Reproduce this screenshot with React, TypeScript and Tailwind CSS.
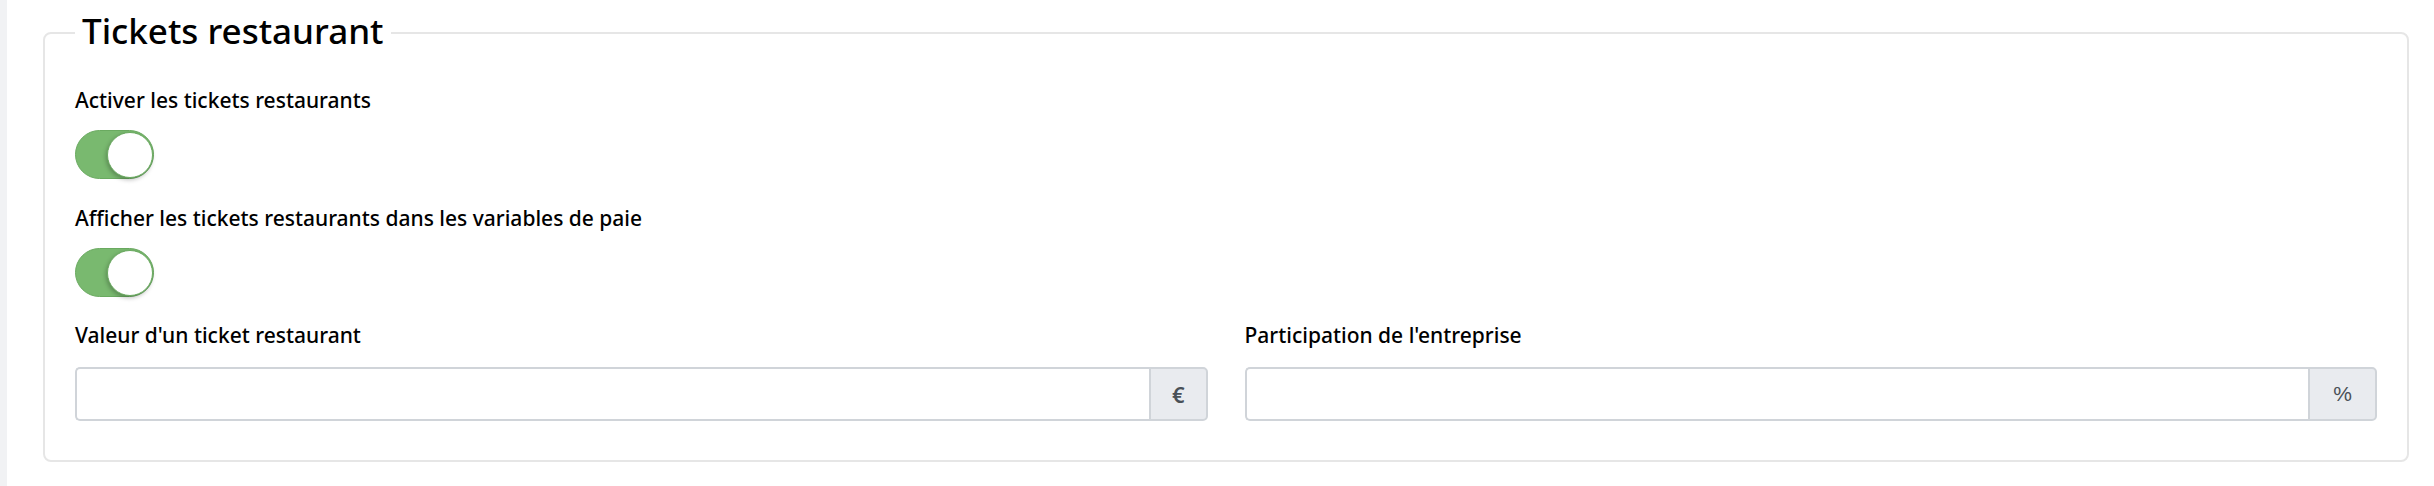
import { useState } from "react";

function Toggle({ on, onChange }: { on: boolean; onChange: () => void }) {
  return (
    <button
      type="button"
      onClick={onChange}
      className={`relative flex h-[49px] w-[79px] items-center rounded-full border ${
        on ? "border-[#6aaa60] bg-[#79b96f]" : "border-[#d0d4d9] bg-[#eef0f2]"
      }`}
    >
      <span
        className={`absolute top-[0.5px] h-[46px] w-[46px] rounded-full border border-[#6aaa60] bg-white shadow-[-1px_2px_4px_rgba(0,0,0,0.25)] ${
          on ? "right-[0px]" : "left-[0px]"
        }`}
      />
    </button>
  );
}

function AddonInput({ label, addon, addonClass }: { label: string; addon: string; addonClass: string }) {
  return (
    <div className="flex flex-col">
      <label className="mb-[19px] text-[21px] leading-[26px] font-medium text-black">{label}</label>
      <div className="flex h-[54px]">
        <input
          type="text"
          className="min-w-0 flex-1 rounded-l-[5px] border-2 border-r-0 border-[#d0d4d9] bg-white px-3 outline-none"
        />
        <span
          className={`flex items-center rounded-r-[5px] border-2 border-[#d0d4d9] bg-[#e9ebef] text-[#495057] ${addonClass}`}
        >
          {addon}
        </span>
      </div>
    </div>
  );
}

export default function App() {
  const [active, setActive] = useState(true);
  const [show, setShow] = useState(true);

  return (
    <div className="flex min-h-[486px] bg-white font-['Noto_Sans',sans-serif]">
      <div className="w-[7px] shrink-0 bg-[#f1f2f4]" />
      <div className="flex-1 pl-[36px] pr-[25px] pt-[7px]">
        <fieldset className="rounded-lg border-2 border-[#e6e6e6] px-[30px] pb-[39px] pt-[28px]">
          <legend className="px-[7px] pb-1 text-[35px] leading-[48px] font-medium text-black">
            Tickets restaurant
          </legend>

          <div className="flex flex-col">
            <label className="mb-[17px] text-[21px] leading-[26px] font-medium text-black">
              Activer les tickets restaurants
            </label>
            <Toggle on={active} onChange={() => setActive(!active)} />
          </div>

          <div className="mt-[26px] flex flex-col">
            <label className="mb-[17px] text-[21px] leading-[26px] font-medium text-black">
              Afficher les tickets restaurants dans les variables de paie
            </label>
            <Toggle on={show} onChange={() => setShow(!show)} />
          </div>

          <div className="mt-[25px] grid grid-cols-2 gap-[37px]">
            <AddonInput
              label="Valeur d'un ticket restaurant"
              addon="€"
              addonClass="px-[21px] text-[22px] font-semibold"
            />
            <AddonInput
              label="Participation de l'entreprise"
              addon="%"
              addonClass="px-[23px] font-['Liberation_Sans',sans-serif] text-[21px]"
            />
          </div>
        </fieldset>
      </div>
    </div>
  );
}
